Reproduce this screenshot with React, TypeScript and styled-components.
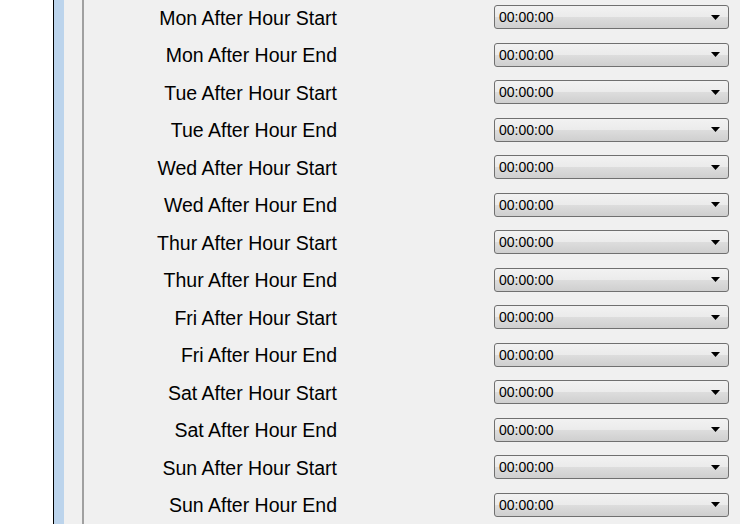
import { FC } from 'react';
import { createGlobalStyle, styled } from 'styled-components';

const days = ['Mon', 'Tue', 'Wed', 'Thur', 'Fri', 'Sat', 'Sun'];

const rows = days.flatMap(d => [`${d} After Hour Start`, `${d} After Hour End`]);

const GlobalStyle = createGlobalStyle`
  html, body {
    margin: 0;
    padding: 0;
    width: 740px;
    height: 524px;
    overflow: hidden;
    background: #ffffff;
  }
`;

const TimeCombo: FC<{ value: string }> = ({ value }) => (
  <S.Combo>
    <S.ComboText>{value}</S.ComboText>
    <S.Arrow width="9" height="5" viewBox="0 0 9 5">
      <path d="M0 0H9L4.5 5Z" fill="#000" />
    </S.Arrow>
  </S.Combo>
);

const App: FC = () => (
  <>
    <GlobalStyle />
    <S.Window>
      <S.Blank />
      <S.Splitter />
      <S.Gutter />
      <S.Panel>
        <S.Rows>
          {rows.map(label => (
            <S.Row key={label}>
              <S.Label>{label}</S.Label>
              <TimeCombo value="00:00:00" />
            </S.Row>
          ))}
        </S.Rows>
      </S.Panel>
    </S.Window>
  </>
);

const S = {
  Window: styled.div`
    display: flex;
    width: 740px;
    height: 524px;
    overflow: hidden;
  `,

  Blank: styled.div`
    width: 53px;
    background: #ffffff;
    border-right: 1px solid #000000;
  `,

  Splitter: styled.div`
    width: 10px;
    background: #bcd4ec;
  `,

  Gutter: styled.div`
    width: 18px;
    background: #f0f0f0;
    border-right: 2px solid #a0a0a0;
  `,

  Panel: styled.div`
    flex: 1;
    background: #f0f0f0;
    overflow: hidden;
  `,

  Rows: styled.div`
    display: grid;
    grid-auto-rows: 37.5px;
    margin-top: -1.5px;
  `,

  Row: styled.div`
    display: grid;
    grid-template-columns: 253px 235px;
    column-gap: 157px;
    align-items: center;
  `,

  Label: styled.span`
    padding-top: 2px;
    text-align: right;
    font-family: 'Liberation Sans', Arial, sans-serif;
    font-size: 19.5px;
    color: #000000;
    white-space: nowrap;
  `,

  Combo: styled.div`
    box-sizing: border-box;
    height: 24px;
    border: 1px solid #707070;
    border-radius: 3px;
    background: linear-gradient(#f2f2f2 0%, #ebebeb 50%, #dddddd 51%, #cfcfcf 100%);
    display: flex;
    align-items: center;
    padding: 0 8px 0 4px;
  `,

  ComboText: styled.span`
    flex: 1;
    font-family: 'Liberation Sans', Arial, sans-serif;
    font-size: 14px;
    color: #000000;
  `,

  Arrow: styled.svg`
    display: block;
  `,
};

export default App;
